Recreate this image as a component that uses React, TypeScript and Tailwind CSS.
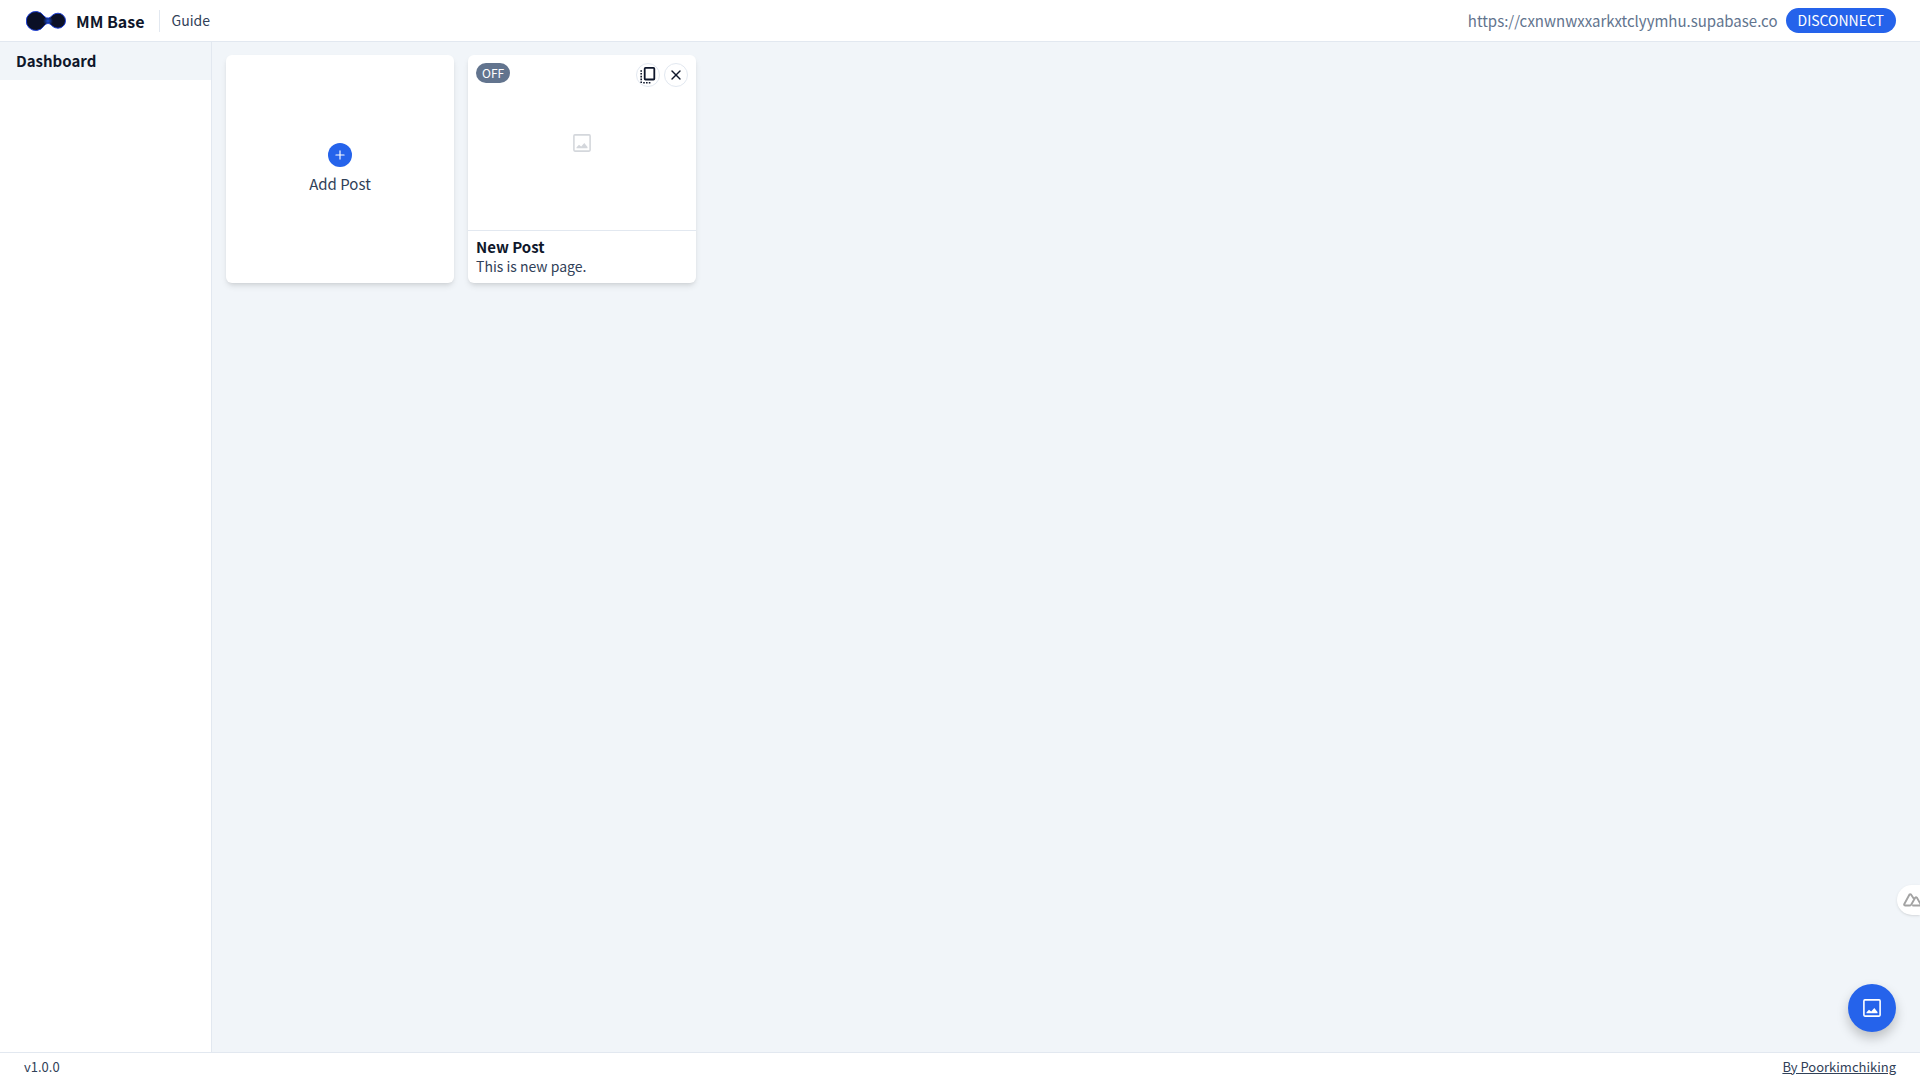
import { Plus, X } from "lucide-react";

function Logo() {
  return (
    <svg className="h-6 w-10" viewBox="2 0 40 24" stroke="#1d3fd8" strokeWidth="1" aria-hidden="true">
      <defs>
        <radialGradient id="neck" gradientUnits="userSpaceOnUse" cx="24" cy="12" r="5">
          <stop offset="0" stopColor="#1d4ed8" />
          <stop offset="1" stopColor="#0b1026" />
        </radialGradient>
      </defs>
      <path fill="url(#neck)" d="M19.500 6.500C21.500 8.800 23.500 9.800 26 8.500C27.500 7.500 29.500 4.200 34 4.200A7.500 7.500 0 0 1 34 19.200C29.500 19.200 27.500 16 26 15C23.500 13.800 21.500 15 19.500 17.500A9.500 9.500 0 1 1 19.500 6.500Z" />
    </svg>
  );
}

function ImageIcon({ className }: { className: string }) {
  return (
    <svg className={className} viewBox="0 0 18 18" fill="none" aria-hidden="true">
      <rect x="0.900" y="0.900" width="16.200" height="16.200" rx="1" stroke="currentColor" strokeWidth="1.600" />
      <path d="M3.500 14.300V13.200L6 10.700L8.200 12.600L11.300 9L14.500 13V14.300Z" fill="currentColor" />
    </svg>
  );
}

function CopyIcon() {
  return (
    <svg className="size-[18px] shrink-0" viewBox="0 0 18 18" fill="none" stroke="currentColor" aria-hidden="true">
      <rect x="5.700" y="1.900" width="9.600" height="11.600" rx="0.800" strokeWidth="1.800" />
      <path d="M2.200 4.200V17" strokeWidth="1.600" strokeDasharray="1.600 1.200" />
      <path d="M4.200 16.800H12" strokeWidth="1.600" strokeDasharray="1.600 1.200" />
    </svg>
  );
}

function MountainsIcon() {
  return (
    <svg className="h-3.5 w-[22px] shrink-0" viewBox="0 0 22 14" fill="none" stroke="#a3a3a3" strokeWidth="1.900" strokeLinejoin="round" strokeLinecap="round" aria-hidden="true">
      <path d="M10.500 5.200L8 1.500Q7.200 .7 6.500 1.500L1.200 11.200Q.9 12.400 2 12.500H6.200Q7.600 12.500 8.300 11.400L12.300 4.600Q13 3.800 13.800 4.600L17.700 11.200Q18.200 12.300 17 12.500H10" />
    </svg>
  );
}

function Header() {
  return (
    <header className="flex h-[42px] shrink-0 items-center justify-between border-b border-slate-200 bg-white px-6">
      <div className="flex items-center">
        <a href="#home" className="flex items-center gap-2.5 pl-0.5 text-[16px] font-bold text-slate-900">
          <Logo />
          MM Base
        </a>
        <nav className="ml-3.5 flex h-[22px] items-center border-l border-slate-200 pl-3">
          <a href="#guide" className="text-[14px]">Guide</a>
        </nav>
      </div>
      <div className="flex items-center gap-2">
        <span className="text-[15px] leading-[25px] text-slate-500">https://cxnwnwxxarkxtclyymhu.supabase.co</span>
        <button type="button" className="h-[25px] rounded-full bg-[#2563eb] px-3 text-[14px] leading-[25px] text-white">
          DISCONNECT
        </button>
      </div>
    </header>
  );
}

function PostCard() {
  return (
    <article className="relative flex aspect-square flex-col overflow-hidden rounded-md bg-white shadow-md">
      <div className="flex flex-1 items-center justify-center border-b border-slate-200 text-[#d4d7dc]">
        <ImageIcon className="size-[18px]" />
      </div>
      <div className="px-2 pt-1.5 pb-2">
        <h2 className="text-[15px] leading-5 font-bold text-slate-900">New Post</h2>
        <p className="text-[14px] leading-[18px]">This is new page.</p>
      </div>
      <div className="absolute inset-x-2 top-2 flex items-start justify-between">
        <span className="rounded-full bg-slate-500 px-1.5 text-[12px] leading-5 text-white">OFF</span>
        <div className="flex gap-1 text-slate-900">
          <button type="button" aria-label="Duplicate post" className="flex size-6 items-center justify-center rounded-full border border-slate-200 bg-white">
            <CopyIcon />
          </button>
          <button type="button" aria-label="Delete post" className="flex size-6 items-center justify-center rounded-full border border-slate-200 bg-white">
            <X className="size-4 shrink-0" strokeWidth={2} />
          </button>
        </div>
      </div>
    </article>
  );
}

export default function App() {
  return (
    <div className="flex min-h-screen flex-col bg-slate-100 font-['Noto_Sans_CJK_KR',sans-serif] text-slate-700">
      <Header />
      <div className="flex flex-1">
        <aside className="w-[212px] shrink-0 border-r border-slate-200 bg-white">
          <a href="#dashboard" className="block bg-slate-100 px-4 text-[15px] leading-[38px] font-bold text-slate-900">
            Dashboard
          </a>
        </aside>
        <main className="grid flex-1 grid-cols-7 content-start gap-3.5 px-3.5 pt-[13px]">
          <button type="button" className="flex aspect-square flex-col items-center justify-center gap-1.5 rounded-md bg-white shadow-md">
            <span className="flex size-6 items-center justify-center rounded-full bg-[#2563eb] text-white">
              <Plus className="size-3.5" strokeWidth={2} />
            </span>
            <span className="text-[15px] leading-[22px]">Add Post</span>
          </button>
          <PostCard />
        </main>
      </div>
      <footer className="flex h-7 shrink-0 items-center justify-between border-t border-slate-200 bg-white px-6 text-[13px]">
        <span>v1.0.0</span>
        <a href="#author" className="underline">By Poorkimchiking</a>
      </footer>
      <button type="button" aria-label="Open developer tools" className="fixed right-0 bottom-[165px] flex h-[30px] w-[23px] items-center overflow-hidden rounded-l-full bg-white pl-1.5 shadow-sm">
        <MountainsIcon />
      </button>
      <button type="button" aria-label="Open image library" className="fixed right-6 bottom-12 flex size-12 items-center justify-center rounded-full bg-[#2563eb] text-white shadow-[0_6px_12px_rgba(0,0,0,0.22)]">
        <ImageIcon className="size-[18px]" />
      </button>
    </div>
  );
}
